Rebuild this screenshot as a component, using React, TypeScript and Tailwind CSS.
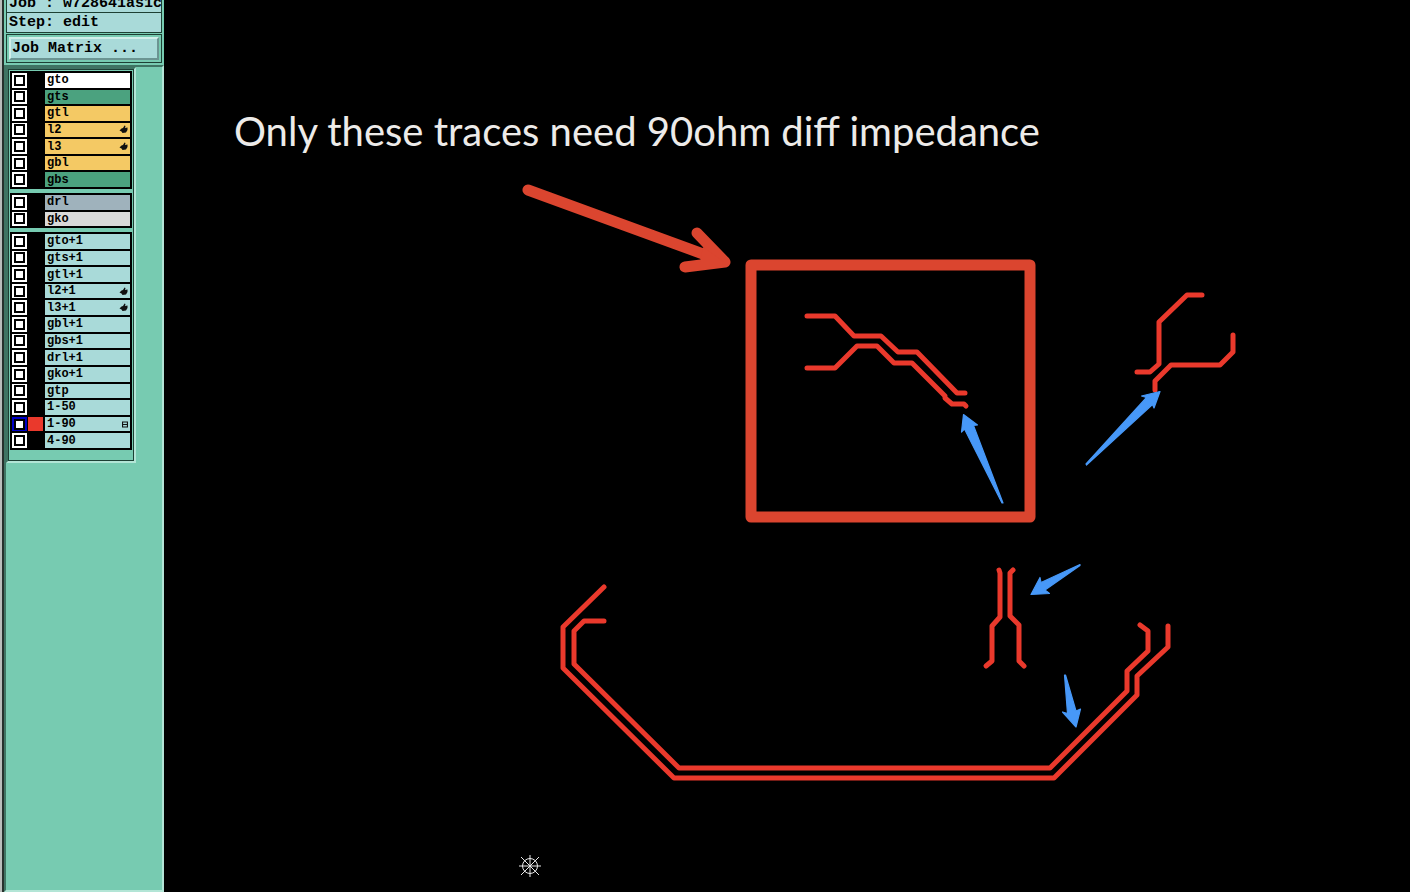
import React from "react";

type Layer = { name: string; tone: string; mark?: "hand" | "grid"; active?: boolean };

const cyan = "bg-[#a9dad9]";
const amber = "bg-[#f4c964]";
const green = "bg-[#4ba27f]";

const groups: { size: string; layers: Layer[] }[] = [
  {
    size: "h-[118px]",
    layers: [
      { name: "gto", tone: "bg-white" },
      { name: "gts", tone: green },
      { name: "gtl", tone: amber },
      { name: "l2", tone: amber, mark: "hand" },
      { name: "l3", tone: amber, mark: "hand" },
      { name: "gbl", tone: amber },
      { name: "gbs", tone: green },
    ],
  },
  {
    size: "h-[35px]",
    layers: [
      { name: "drl", tone: "bg-[#9fb2bc]" },
      { name: "gko", tone: "bg-[#d9d9d9]" },
    ],
  },
  {
    size: "h-[218px]",
    layers: [
      { name: "gto+1", tone: cyan },
      { name: "gts+1", tone: cyan },
      { name: "gtl+1", tone: cyan },
      { name: "l2+1", tone: cyan, mark: "hand" },
      { name: "l3+1", tone: cyan, mark: "hand" },
      { name: "gbl+1", tone: cyan },
      { name: "gbs+1", tone: cyan },
      { name: "drl+1", tone: cyan },
      { name: "gko+1", tone: cyan },
      { name: "gtp", tone: cyan },
      { name: "1-50", tone: cyan },
      { name: "1-90", tone: cyan, mark: "grid", active: true },
      { name: "4-90", tone: cyan },
    ],
  },
];

function HandMark() {
  return (
    <svg width="9" height="9" viewBox="0 0 9 9" aria-hidden="true">
      <path d="M0.5 5.5L2.5 3.5L4 3L5.5 0.5L6.5 1L6 3L8.5 2.5L8.5 5L7 7.5L3.5 8L2.5 6.5Z" fill="#111" />
    </svg>
  );
}

function GridMark() {
  return (
    <svg width="6" height="7" viewBox="0 0 6 7" aria-hidden="true">
      <path d="M0 1H6M0 3.5H6M0 6H6M0.5 1V6M5.5 1V6" stroke="#111" strokeWidth="1.2" fill="none" />
    </svg>
  );
}

function LayerRow({ layer }: { layer: Layer }) {
  const id = "layer-" + layer.name;
  return (
    <li className="flex min-h-0 gap-px pb-0.5">
      <span className={`flex w-[15px] items-center justify-center ${layer.active ? "bg-[#0000c8]" : "bg-white"}`}>
        <input
          id={id}
          type="checkbox"
          className="size-[11px] appearance-none border-2 border-black bg-white"
        />
      </span>
      <span className={`w-[15px] ${layer.active ? "bg-[#ea392c]" : "bg-black"}`} />
      <label
        htmlFor={id}
        className={`ml-px flex min-w-0 flex-1 items-center justify-between px-0.5 text-xs leading-3 font-bold ${layer.tone}`}
      >
        {layer.name}
        {layer.mark === "hand" && <HandMark />}
        {layer.mark === "grid" && <GridMark />}
      </label>
    </li>
  );
}

function Sidebar() {
  return (
    <aside className="flex w-[164px] shrink-0 flex-col border-l-2 border-[#b9bdbb] bg-[#77cbb1] font-['Liberation_Mono',monospace] text-black">
      <div className="flex flex-1 flex-col border-l-2 border-[#26312d]">
        <div className="mr-0.5 ml-0.5 border-x border-b border-[#1d4034] bg-[#1d4034] text-[15px] font-bold whitespace-nowrap">
          <div className={`flex h-3 items-end overflow-hidden pl-0.5 leading-4 ${cyan}`}>Job : w728641as1c</div>
          <div className={`mt-px h-[19px] pl-0.5 leading-5 ${cyan}`}>Step: edit</div>
        </div>
        <div className="mt-px mr-0.5 ml-0.5 flex border border-[#1d4034] p-0.5">
          <button
            className={`h-[23px] flex-1 border-2 border-t-[#d2efea] border-r-[#6b9492] border-b-[#6b9492] border-l-[#d2efea] pl-px text-left text-[15px] leading-[18px] font-bold whitespace-nowrap ${cyan}`}
          >
            Job Matrix ...
          </button>
        </div>
        <div className="mt-0.5 flex flex-1 flex-col items-start border-2 border-t-[#3f7463] border-r-[#b3e5d6] border-b-[#b3e5d6] border-l-[#3f7463]">
          <div className="border-2 border-t-[#3f7463] border-r-[#b3e5d6] border-b-[#b3e5d6] border-l-[#3f7463]">
            <div className="flex w-[126px] flex-col gap-1 border border-[#1d4034] px-px pt-px pb-[10px]">
              {groups.map((group) => (
                <ul key={group.size} className={`grid auto-rows-fr bg-black px-0.5 pt-0.5 ${group.size}`}>
                  {group.layers.map((layer) => (
                    <LayerRow key={layer.name} layer={layer} />
                  ))}
                </ul>
              ))}
            </div>
          </div>
        </div>
      </div>
    </aside>
  );
}

const traces = [
  "M807 316H835L854 336H881L898 352H917L957 393H965",
  "M807 368H835L857 346H877L894 363H912L945 396V398L952 404H964L966 406",
  "M1202 295H1187L1159 322V364L1150 372H1137",
  "M1233 335V352L1220 365H1171L1155 381V390",
  "M604 587L563 627V668L674 778H1054L1137 695V676L1168 647V626",
  "M604 621H584L574 631V664L679 768H1050L1127 691V671L1148 651V631L1140 625",
  "M999 570L1000 573V617L992 626V661L986 666",
  "M1013 570L1010 573V616L1019 625V661L1024 666",
];

const pointers = [
  "M963.5 414.5L977.5 425L973.5 425.5L1003 503L1002 503L964.5 429L961.5 432Z",
  "M1160 391.5L1154 408L1152.5 404.5L1086.5 465L1086 464L1146.5 397.5L1141.5 396Z",
  "M1031 594.5L1040 577.5L1041 582.5L1080 564.5L1080 565.5L1045 590L1049.5 593.5Z",
  "M1076 727L1062.5 712L1067.5 713.5L1064.5 675L1065.5 675L1076 711L1080.5 709Z",
];

function Board() {
  return (
    <main className="relative min-w-0 flex-1 overflow-hidden bg-black">
      <svg
        className="absolute top-0 left-0"
        width="1246"
        height="892"
        viewBox="164 0 1246 892"
        role="img"
        aria-label="Differential pair traces"
      >
        <g fill="none" stroke="#ea392c" strokeWidth="5" strokeLinejoin="round" strokeLinecap="round">
          {traces.map((d) => (
            <path key={d} d={d} />
          ))}
        </g>
        <g fill="#4798f8" stroke="#4798f8" strokeWidth="1.2" strokeLinejoin="round">
          {pointers.map((d) => (
            <path key={d} d={d} />
          ))}
        </g>
        <g fill="none" stroke="#db452f" strokeWidth="11" strokeLinecap="round" strokeLinejoin="round">
          <rect x="751" y="265" width="279" height="252" />
          <path d="M528 190L725 262M697 233L725 262L685 267" />
          <path d="M703 247L724 262L700 262Z" fill="#db452f" stroke="none" />
        </g>
        <g fill="none" stroke="#e8e8e8" strokeWidth="1">
          <circle cx="530" cy="866" r="7.5" />
          <path d="M519 866H541M530 855V877M521 857L539 875M539 857L521 875" />
        </g>
      </svg>
      <h1 className="relative pt-[107px] pl-[70px] font-[Lato,sans-serif] text-[40px] leading-[48px] whitespace-nowrap text-[#edebe9]">
        Only these traces need 90ohm diff impedance
      </h1>
    </main>
  );
}

export default function App() {
  return (
    <div className="flex min-h-screen bg-black">
      <Sidebar />
      <Board />
    </div>
  );
}
